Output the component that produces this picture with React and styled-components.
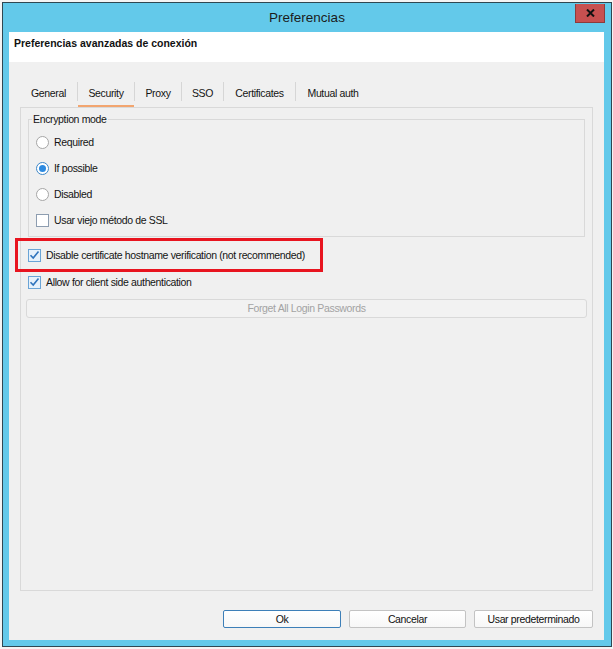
import React from 'react'
import styled, { createGlobalStyle } from 'styled-components'

const Global = createGlobalStyle`
  html, body { margin: 0; padding: 0; background: #f4f4f4; }
  body { font-family: "Liberation Sans", Arial, sans-serif; }
`

const Window = styled.div`
  box-sizing: border-box;
  width: 610px;
  height: 645px;
  margin: 2px 0 0 2px;
  border: 1px solid #2f4752;
  background: #63c9ea;
  display: flex;
  flex-direction: column;
  padding: 0 7px 6px 6px;
`

const TitleBar = styled.div`
  height: 29px;
  display: grid;
  grid-template-columns: 1fr auto 1fr;
  align-items: center;
  margin: 0 -7px 0 -6px;
`

const Title = styled.div`
  grid-column: 2;
  font-size: 13.5px;
  color: #1b1b1b;
  padding-bottom: 1px;
`

const CloseBtn = styled.div`
  grid-column: 3;
  justify-self: end;
  align-self: start;
  margin: 1px 6px 0 0;
  box-sizing: border-box;
  width: 30px;
  height: 19px;
  background: #c75050;
  border: 1px solid #8d3b3b;
  border-top: none;
  display: flex;
  align-items: center;
  justify-content: center;
`

const Header = styled.div`
  box-sizing: border-box;
  height: 30px;
  background: #ffffff;
  padding: 5px 5px 0;
  font-size: 10.5px;
  line-height: 12px;
  font-weight: bold;
  color: #111;
`

const Body = styled.div`
  flex: 1;
  background: #f0f0f0;
  display: flex;
  flex-direction: column;
  padding: 18px 11px 12px 11px;
  font-size: 10.5px;
  letter-spacing: -0.35px;
  color: #141414;
`

const TabStrip = styled.div`
  display: flex;
  height: 27px;
`

const Tab = styled.div`
  box-sizing: border-box;
  width: ${p => p.w}px;
  height: 27px;
  padding-top: 7px;
  line-height: 12px;
  text-align: center;
  white-space: nowrap;
  border-bottom: 2px solid ${p => (p.active ? '#f2a56f' : 'transparent')};
`

const TabSep = styled.div`
  width: 1px;
  height: 19px;
  margin-top: 2px;
  background: #d6d6d6;
`

const Panel = styled.div`
  flex: 1;
  border: 1px solid #d9d9d9;
  padding: 5px 7px 0 7px;
  display: flex;
  flex-direction: column;
`

const Group = styled.fieldset`
  margin: 0;
  padding: 4px 0 3px 7px;
  border: 1px solid #d9d9d9;
  min-width: 0;
`

const Legend = styled.legend`
  padding: 0 1px;
  margin-left: -4px;
  line-height: 12px;
`

const Row = styled.div`
  display: flex;
  align-items: center;
  height: ${p => p.h || 26}px;
  gap: 5px;
  position: relative;
`

const Radio = styled.span`
  box-sizing: border-box;
  width: 13px;
  height: 13px;
  border-radius: 50%;
  background: #fff;
  border: 1px solid ${p => (p.on ? '#3d87c8' : '#a6a6a6')};
  display: flex;
  align-items: center;
  justify-content: center;
  &::after {
    content: '';
    width: 7px;
    height: 7px;
    border-radius: 50%;
    background: ${p => (p.on ? '#2d8ae0' : 'transparent')};
  }
`

const Box = styled.span`
  box-sizing: border-box;
  width: 13px;
  height: 13px;
  border: 1px solid ${p => (p.on ? '#6aa4d6' : '#8d9db0')};
  background: ${p => (p.on ? '#e6f1fb' : '#fff')};
  display: flex;
  align-items: center;
  justify-content: center;
`

const Highlight = styled.div`
  position: absolute;
  left: -13px;
  top: -8px;
  width: 308px;
  height: 34px;
  box-sizing: border-box;
  border: 3px solid #e8141f;
  pointer-events: none;
`

const Checks = styled.div`
  display: flex;
  flex-direction: column;
  margin-top: 9px;
`

const WideButton = styled.div`
  box-sizing: border-box;
  height: 19px;
  margin: 8px -2px 0 -2px;
  border: 1px solid #d9d9d9;
  border-radius: 3px;
  background: #f2f2f2;
  color: #a3a3a3;
  text-align: center;
  line-height: 17px;
`

const Footer = styled.div`
  display: flex;
  justify-content: flex-end;
  gap: 8px;
  margin-top: 19px;
`

const Button = styled.div`
  box-sizing: border-box;
  width: ${p => p.w}px;
  height: 18px;
  border: 1px solid ${p => (p.primary ? '#3d7fb8' : '#c3c3c3')};
  border-radius: 2px;
  background: linear-gradient(#ffffff, #f7f7f7);
  text-align: center;
  line-height: 16px;
  color: #111;
`

const Check = () => (
  <svg width="11" height="10" viewBox="0 0 11 10">
    <path d="M1.5 5.2 L4.2 8 L9.5 1.5" fill="none" stroke="#2f74bd" strokeWidth="1.6" />
  </svg>
)

const tabs = [
  { label: 'General', w: 57 },
  { label: 'Security', w: 56, active: true },
  { label: 'Proxy', w: 46 },
  { label: 'SSO', w: 41 },
  { label: 'Certificates', w: 71 },
  { label: 'Mutual auth', w: 74 },
]

const modes = [
  { label: 'Required' },
  { label: 'If possible', on: true },
  { label: 'Disabled' },
]

export default function App() {
  return (
    <>
      <Global />
      <Window>
        <TitleBar>
          <Title>Preferencias</Title>
          <CloseBtn>
            <svg width="9" height="8" viewBox="0 0 9 8">
              <path d="M1 0.5 L8 7.5 M8 0.5 L1 7.5" stroke="#111" strokeWidth="2" />
            </svg>
          </CloseBtn>
        </TitleBar>
        <Header>Preferencias avanzadas de conexión</Header>
        <Body>
          <TabStrip>
            {tabs.map((t, i) => (
              <React.Fragment key={t.label}>
                {i > 0 && <TabSep />}
                <Tab w={t.w} active={t.active}>{t.label}</Tab>
              </React.Fragment>
            ))}
          </TabStrip>
          <Panel>
            <Group>
              <Legend>Encryption mode</Legend>
              {modes.map(m => (
                <Row key={m.label}>
                  <Radio on={m.on} />
                  <span>{m.label}</span>
                </Row>
              ))}
              <Row>
                <Box />
                <span>Usar viejo método de SSL</span>
              </Row>
            </Group>
            <Checks>
              <Row h={18}>
                <Highlight />
                <Box on><Check /></Box>
                <span>Disable certificate hostname verification (not recommended)</span>
              </Row>
              <Row h={18} style={{ marginTop: 9 }}>
                <Box on><Check /></Box>
                <span>Allow for client side authentication</span>
              </Row>
            </Checks>
            <WideButton>Forget All Login Passwords</WideButton>
          </Panel>
          <Footer>
            <Button w={118} primary>Ok</Button>
            <Button w={117}>Cancelar</Button>
            <Button w={119}>Usar predeterminado</Button>
          </Footer>
        </Body>
      </Window>
    </>
  )
}
